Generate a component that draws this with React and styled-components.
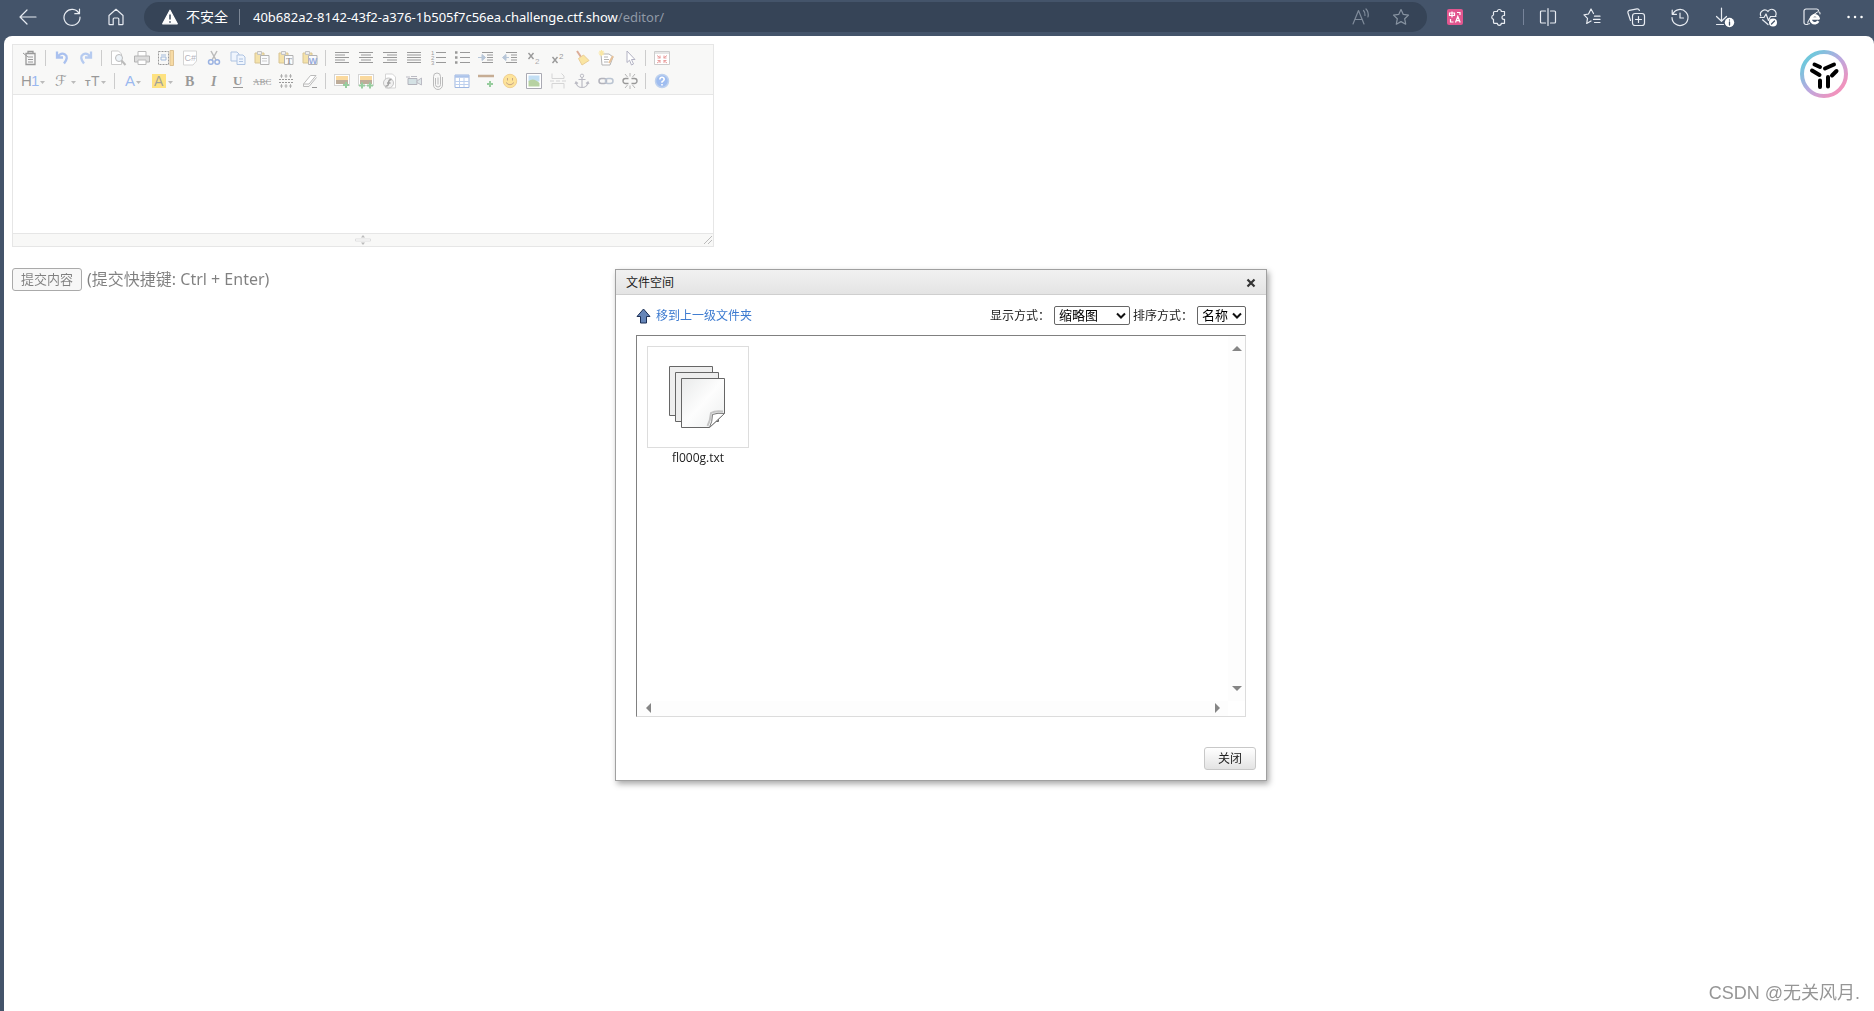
import React from "react";
import styled, { createGlobalStyle, css } from "styled-components";

const ui = `"Open Sans", "Noto Sans CJK SC", sans-serif`;
const wide = `"Noto Sans", "Noto Sans CJK SC", sans-serif`;

const Global = createGlobalStyle`
  * { box-sizing: border-box; }
  body { margin: 0; background: #44546a; font-family: ${ui}; }
  button { font-family: inherit; cursor: pointer; }
  svg { display: block; overflow: visible; }
`;

const Window = styled.div`
  min-height: 100vh;
  display: flex;
  flex-direction: column;
  background: #44546a;
`;
const BrowserBar = styled.header`
  height: 36px;
  padding: 2px 0 4px 6px;
  display: flex;
  align-items: center;
`;
const BarButton = styled.button`
  width: 44px;
  height: 30px;
  padding: 0;
  border: 0;
  background: none;
  display: grid;
  place-items: center;
  flex: none;
`;
const NarrowBarButton = styled(BarButton)`
  width: 40px;
`;
const Address = styled.div`
  flex: 1;
  height: 30px;
  margin: 0 6px;
  padding: 0 6px 0 18px;
  border-radius: 15px;
  background: #364457;
  display: flex;
  align-items: center;
  font-size: 14px;
  color: #fff;
`;
const Security = styled.span`
  margin-left: 8px;
  padding-right: 11px;
  border-right: 1px solid #7b8695;
  line-height: 16px;
  white-space: nowrap;
`;
const Url = styled.span`
  flex: 1;
  margin-left: 13px;
  font-family: ${wide};
  font-size: 13px;
  white-space: nowrap;
`;
const UrlPath = styled.span`
  color: #8f99a6;
`;
const BarRule = styled.span`
  width: 1px;
  height: 16px;
  margin: 0 2px;
  background: #77849a;
`;
const Page = styled.main`
  position: relative;
  flex: 1;
  margin-left: 4px;
  padding: 8px;
  border-radius: 8px 8px 0 0;
  background: #fff;
  overflow: hidden;
`;
const Dimmed = styled.div`
  opacity: 0.5;
`;
const Editor = styled.section`
  width: 702px;
  max-width: 100%;
  border: 1px solid #ccc;
`;
const Toolbar = styled.div`
  padding: 1px 5px 2px;
  background: #f0f0ee;
  border-bottom: 1px solid #ccc;
`;
const ToolRow = styled.div`
  display: flex;
  align-items: center;
  height: 23px;
`;
const Tool = styled.button`
  width: ${(p) => p.$w || 24}px;
  height: 22px;
  padding: 0;
  border: 0;
  background: none;
  display: grid;
  place-items: center;
`;
const ToolRule = styled.span`
  width: 1px;
  height: 16px;
  margin: 0 4px 0 3px;
  background: #999;
`;
const EditArea = styled.textarea`
  display: block;
  width: 100%;
  height: 138px;
  padding: 5px;
  border: 0;
  outline: 0;
  resize: none;
  font: 14px ${ui};
`;
const StatusBar = styled.div`
  height: 13px;
  display: grid;
  grid-template-columns: 1fr auto 1fr;
  align-items: center;
  background: #f0f0ee;
  border-top: 1px solid #ccc;
`;
const Corner = styled.span`
  grid-column: 3;
  justify-self: end;
`;
const SubmitRow = styled.div`
  margin-top: 20px;
  display: flex;
  align-items: center;
  gap: 5px;
  font-family: ${wide};
  font-size: 16px;
  line-height: 24px;
  color: #000;
`;
const Submit = styled.button`
  height: 23px;
  padding: 0 8px;
  border: 1px solid #555;
  border-radius: 3px;
  background: #efefef;
  font-size: 13px;
  line-height: 20px;
`;
const Badge = styled.div`
  position: absolute;
  top: 14px;
  right: 26px;
`;
const Overlay = styled.div`
  position: absolute;
  inset: 0;
  padding: 2px 0 0 4px;
  display: grid;
  place-items: center;
`;
const Dialog = styled.section`
  width: 652px;
  max-width: 100%;
  border: 1px solid #a0a0a0;
  background: #fff;
  box-shadow: 2px 3px 6px rgba(0, 0, 0, 0.35);
  font-size: 12px;
  line-height: 18px;
  color: #222;
`;
const DialogHead = styled.header`
  height: 25px;
  padding: 2px 9px 0 10px;
  display: flex;
  align-items: center;
  justify-content: space-between;
  background: linear-gradient(#f1f1f1, #e4e4e4);
  border-bottom: 1px solid #cfcfcf;
`;
const DialogTitle = styled.h1`
  margin: 0;
  font-size: 12px;
  font-weight: 400;
`;
const CloseX = styled.button`
  width: 12px;
  height: 16px;
  padding: 0;
  border: 0;
  background: none;
  display: grid;
  place-items: center;
`;
const DialogBody = styled.div`
  padding: 11px 20px 0;
`;
const Controls = styled.div`
  height: 20px;
  display: flex;
  align-items: center;
  justify-content: space-between;
`;
const UpLink = styled.a`
  padding-top: 1px;
  display: flex;
  align-items: center;
  gap: 5px;
  color: #3d7bd0;
  text-decoration: none;
`;
const Options = styled.div`
  display: flex;
  align-items: center;
`;
const Option = styled.label`
  display: flex;
  align-items: center;
  gap: 4px;
  margin-left: 3px;
`;
const SelectBox = styled.span`
  display: grid;
  align-items: center;
`;
const Select = styled.select`
  grid-area: 1 / 1;
  appearance: none;
  width: ${(p) => p.$w}px;
  height: 19px;
  padding: 0 4px;
  border: 1px solid #666;
  border-radius: 2px;
  background: #fff;
  color: #000;
  font: 13px/17px ${ui};
`;
const Chevron = styled.svg`
  grid-area: 1 / 1;
  justify-self: end;
  margin-right: 4px;
  pointer-events: none;
`;
const FileArea = styled.div`
  height: 382px;
  margin-top: 9px;
  border: 1px solid;
  border-color: #808080 #dcdcdc #dcdcdc #808080;
  display: grid;
  grid-template: 1fr 15px / 1fr 17px;
`;
const FileList = styled.ul`
  margin: 0;
  padding: 10px;
  list-style: none;
  display: flex;
  flex-wrap: wrap;
  align-content: flex-start;
`;
const FileItem = styled.li`
  width: 102px;
  text-align: center;
`;
const Thumb = styled.div`
  height: 102px;
  margin-bottom: 1px;
  padding-right: 2px;
  border: 1px solid #ddd;
  display: grid;
  place-items: center;
`;
const track = css`
  display: flex;
  justify-content: space-between;
  align-items: center;
  background: #fdfdfd;
`;
const VTrack = styled.div`
  ${track}
  flex-direction: column;
  padding: 10px 0;
`;
const HTrack = styled.div`
  ${track}
  padding: 0 8px 0 9px;
`;
const DialogFoot = styled.footer`
  padding: 30px 10px 10px;
  display: flex;
  justify-content: flex-end;
`;
const CloseButton = styled.button`
  width: 52px;
  height: 23px;
  padding: 0;
  border: 1px solid #c8c8c8;
  border-radius: 3px;
  background: linear-gradient(#fff, #e3e3e3);
  color: #222;
  font-size: 12px;
`;
const Watermark = styled.div`
  position: absolute;
  right: 14px;
  bottom: 5px;
  font: 18px/26px "Liberation Sans", "Noto Sans CJK SC", sans-serif;
  color: #969696;
`;

/* ---------- browser icons ---------- */
const Line = ({ children, s = 18, c = "#e8ecf2", w = 1.2 }) => (
  <svg width={s} height={s} viewBox="0 0 18 18" fill="none" stroke={c} strokeWidth={w} strokeLinecap="round" strokeLinejoin="round">{children}</svg>
);
const STAR = "M9 1.5l2.3 4.9 5.2.7-3.8 3.7 1 5.4L9 13.6l-4.7 2.6 1-5.4L1.500 7.100l5.200-.7z";
const bar = {
  back: <Line><path d="M17 9H1M8 2L1 9l7 7" /></Line>,
  reload: <Line><path d="M16 5.500A8 8 0 1 0 17 9M16.500 1v4.700h-4.700" /></Line>,
  home: <Line><path d="M2 7.500L9 1.300l7 6.200V16a.7.7 0 0 1-.7.7h-3.500V11a1 1 0 0 0-1-1H7.200a1 1 0 0 0-1 1v5.700H2.700A.7.7 0 0 1 2 16z" /></Line>,
  read: <Line c="#7f8b9a"><path d="M1 16L6.500 2.500 12 16M3 11.500h7M11.500 2.500q2 2 1.500 5M14 1q3 3 2 8" /></Line>,
  star: <Line c="#8793a1"><path d={STAR} /></Line>,
  puzzle: <Line><path d="M4.500 3.500h2.800a2 2 0 1 1 4 0h3.200v4h-.6a1.900 1.900 0 0 0 0 3.800h.6v4h-3.200a2 2 0 0 1-4 0H4.500a1 1 0 0 1-1-1v-3a2.200 2.200 0 0 1 0-4.300V4.500a1 1 0 0 1 1-1z" /></Line>,
  split: <Line><path d="M9 .5v17M6.500 3H2.500a1 1 0 0 0-1 1v10a1 1 0 0 0 1 1h4M11.500 3h4a1 1 0 0 1 1 1v10a1 1 0 0 1-1 1h-4" /></Line>,
  favs: <Line><path d="M10.500 5.500L8 1 5.500 6 1 6.800l3.500 3.500-.8 5.200L8 13M11.500 8.200H17M10.500 11.400H17M11.500 14.500H17" /></Line>,
  collect: <Line><rect x="5.500" y="5.500" width="12" height="12" rx="2.500" /><path d="M11.500 8.500v6M8.500 11.500h6M3.500 12.500L1 5q-.5-2 1.500-2.700L10 .8q1.800-.2 2.400 1.700" /></Line>,
  history: <Line><path d="M1.800 6A8 8 0 1 1 1 9.500M1.200 2v4.300h4.300M9 5v5h3.500" /></Line>,
  download: <Line><path d="M6.500 0v13M1.500 8.500l5 4.800 5-4.800M1.500 16.500h7" /><circle cx="14.500" cy="14.500" r="4.700" fill="#fff" stroke="none" /><path d="M14.500 14v3M14.500 12v.1" stroke="#44546a" strokeWidth="1.300" /></Line>,
  heart: <Line><path d="M1.800 8A4.300 4.300 0 0 1 9 3.500 4.300 4.300 0 0 1 16.500 8M1 9.500h4l2-3.500 2.500 6.500 2-4H17M3.500 11.800L9 16.500" /><circle cx="14" cy="14.500" r="4" fill="#fff" stroke="none" /><path d="M12.500 16l3-3" stroke="#44546a" /></Line>,
  ie: (
    <Line>
      <path d="M4.500 16.500H3a2 2 0 0 1-2-2V3a2 2 0 0 1 2-2h10.500a2 2 0 0 1 2 1.500" />
      <path d="M15.300 13.200A4 4 0 1 1 15.700 10.500H8.500" strokeWidth="2.600" stroke="#fff" strokeLinecap="butt" />
      <path d="M6.500 15.800Q3.500 17 5.500 12.500 9 6.500 14.500 4q3-1 2.500 2" stroke="#fff" strokeWidth="1" />
    </Line>
  ),
  more: <Line><path d="M3.500 9h.1M10 9h.1M16.500 9h.1" strokeWidth="2.400" stroke="#fff" /></Line>,
};
const Warn = () => (
  <svg width="16" height="16" viewBox="0 0 16 16"><path d="M8 1.200L15.300 14.800H.7z" fill="#fff" stroke="#fff" strokeWidth="1.200" strokeLinejoin="round" /><path d="M8 5.500v5M8 12.200v1.500" stroke="#364457" strokeWidth="1.500" /></svg>
);
const Translate = () => (
  <svg width="16" height="16" viewBox="0 0 16 16"><rect width="16" height="16" rx="2" fill="#e2568f" /><path d="M2.500 4h5v2.500h-5zM5 2.500V8.500M10 3.500h3v2.500M3.500 10v3h3M8.500 13.500l2.300-6 2.400 6M9.300 11.700h3" fill="none" stroke="#fff" strokeWidth="1.200" /></svg>
);

/* ---------- editor icons ---------- */
const Ic = ({ children, w = 16 }) => (
  <svg width={w} height="16" viewBox={`0 0 ${w} 16`} fill="none" stroke="#333" strokeWidth="1">{children}</svg>
);
const T = ({ x, y, size, c = "#333", f = "Liberation Sans", b, i, children }) => (
  <text x={x} y={y} fontSize={size} fill={c} stroke="none" fontFamily={`"${f}", sans-serif`} fontWeight={b ? 700 : 400} fontStyle={i ? "italic" : "normal"}>{children}</text>
);
const Caret = ({ x }) => <path d={`M${x} 8h5l-2.500 3z`} fill="#777" stroke="none" />;
const lines = (xs) => <path d={xs.map(([a, b], i) => `M${a} ${2.500 + i * 2.500}H${b}`).join("")} />;
const Board = ({ children }) => (
  <>
    <path d="M1 3h9v10H1z" fill="#e9c555" stroke="#b08a2a" /><path d="M3.500 1.500h4v3h-4z" fill="#ddd" stroke="#888" />
    <path d="M6.500 5.500h8.500v9H6.500z" fill="#f4f6fa" stroke="#666" />{children}
  </>
);
const Plus = ({ x, y }) => <path d={`M${x - 3} ${y}h6M${x} ${y - 3}v6`} stroke="#2f9a3c" strokeWidth="2" />;
const Photo = () => (
  <>
    <rect x=".5" y="1.500" width="15" height="11" fill="#fff" stroke="#aaa" />
    <rect x="2" y="3" width="12" height="4" fill="#f5b23c" stroke="none" />
    <rect x="2" y="7" width="12" height="4" fill="#7d5a35" stroke="none" />
  </>
);

const row1 = [
  ["HTML代码", <><path d="M4 3.500h9v11H4zM6 1.500h5v2H6z" fill="#eee" strokeWidth="1.300" /><path d="M6 7h5M6 9.500h5M6 12h5M1 3l5 4" /></>],
  null,
  ["后退", <path d="M3 1.500v6h6M3.500 7Q7 2 11 4.500t-1 9" stroke="#5583de" strokeWidth="2.300" />],
  ["前进", <path d="M13 1.500v6H7M12.500 7Q9 2 5 4.500t1 9" stroke="#6d97e0" strokeWidth="2.300" />],
  null,
  ["预览", <><path d="M1.500 1h7l3 3v10.500h-10z" fill="#fff" stroke="#999" /><circle cx="9" cy="8" r="3.500" fill="#dce8f2" stroke="#777" /><path d="M11.500 10.500l4 4.500" stroke="#777" strokeWidth="2" /></>],
  ["打印", <><path d="M4 6V1.500h8V6" fill="#fff" stroke="#777" /><path d="M.5 6h15v6H.5z" fill="#bbb" stroke="#666" /><path d="M4 10h8v4.500H4z" fill="#fff" stroke="#777" /></>],
  ["模板", <><path d="M.5 1.500h10v13H.5z" strokeDasharray="2 1" /><path d="M3 5h5M3 7h5v3H3z" stroke="#4674b8" /><path d="M12 .5h3.500v15H12z" fill="#eeb64a" stroke="#b98324" /></>],
  ["插入代码", <><path d="M1.500 1h13v10l-3.500 4H1.500z" fill="#fff" stroke="#aaa" /><T x="2.500" y="11" size="9" c="#667">C#</T></>],
  ["剪切", <><path d="M5 1l5 9M11 1l-5 9" stroke="#777" strokeWidth="1.500" /><circle cx="4.800" cy="12" r="2.300" stroke="#3565c4" strokeWidth="1.500" /><circle cx="11.200" cy="12" r="2.300" stroke="#3565c4" strokeWidth="1.500" /></>],
  ["复制", <><path d="M1 2h6l2 2v7H1z" fill="#dfeafa" stroke="#5f88c4" /><path d="M7 5h6l2 2v7.500H7z" fill="#dfeafa" stroke="#5f88c4" /><path d="M9 9h4M9 11.500h4" stroke="#5f88c4" /></>],
  ["粘贴", <Board><path d="M8 8.500h5M8 11h5" stroke="#999" /></Board>],
  ["粘贴为无格式文本", <Board><T x="8" y="13.500" size="9" b f="Liberation Serif">T</T></Board>],
  ["从Word粘贴", <Board><T x="6.800" y="13.500" size="9" b c="#2a55b8">W</T></Board>],
  null,
  ["左对齐", lines([[1, 15], [1, 11], [1, 15], [1, 11], [1, 15]])],
  ["居中", lines([[1, 15], [3, 13], [1, 15], [3, 13], [1, 15]])],
  ["右对齐", lines([[1, 15], [5, 15], [1, 15], [5, 15], [1, 15]])],
  ["两端对齐", lines([[1, 15], [1, 15], [1, 15], [1, 15], [1, 15]])],
  ["编号", <><path d="M6 2.500h10M6 7.500h10M6 12.500h10" /><T x="1" y="5" size="6">1</T><T x="1" y="10" size="6">2</T><T x="1" y="15" size="6">3</T></>],
  ["项目符号", <><path d="M6 2.500h10M6 7.500h10M6 12.500h10" /><path d="M1 2.500h2.500M1 7.500h2.500M1 12.500h2.500" strokeWidth="2.500" /></>],
  ["增加缩进", <><path d="M4 2.500h11M9 5h6M9 7.500h6M9 10h6M4 12.500h11" strokeWidth="1.200" /><path d="M0 7.500h5M4 4.500l3.500 3L4 10.500z" fill="#6f8cb0" stroke="#6f8cb0" /></>],
  ["减少缩进", <><path d="M4 2.500h11M9 5h6M9 7.500h6M9 10h6M4 12.500h11" strokeWidth="1.200" /><path d="M7 7.500H3M4 4.500L.5 7.500l3.500 3z" fill="#6f8cb0" stroke="#6f8cb0" /></>],
  ["下标", <><path d="M2.500 3l5 6M7.500 3l-5 6" strokeWidth="1.400" /><T x="9" y="13.500" size="8" c="#555">2</T></>],
  ["上标", <><path d="M2.500 7l5 6M7.500 7l-5 6" strokeWidth="1.400" /><T x="9" y="8.500" size="8">2</T></>],
  ["清理HTML代码", <><path d="M3 1l4 6" stroke="#b8582e" strokeWidth="2" /><path d="M4.500 8.500l5-3.500 5.500 5.500-7 4.500z" fill="#f5cb45" stroke="#d29a2b" /></>],
  ["一键排版", <><path d="M3 4h8l4 3-3 8H4z" fill="#fff" stroke="#666" /><path d="M6 7h4M6 9.500h5M6 12h4" stroke="#666" /><path d="M3.500 0v6M.5 3h6M1.500 1l4 4M5.500 1l-4 4" stroke="#f3cf4d" strokeWidth="1.200" /><path d="M15 6l-4 7" stroke="#cf8434" strokeWidth="2" /></>],
  ["全选", <path d="M5 1l8 8.500H9.500l2 4.500-2 1-2-4.800L5 12.500z" fill="#fff" stroke="#668" />],
  null,
  ["全屏显示", <><path d="M.5 1.500h15v13H.5z" fill="#fff" stroke="#999" /><path d="M1 3h14" stroke="#ccc" strokeWidth="2" /><path d="M3 5.500l3.500 2.500M13 5.500L9.500 8M3 13l3.500-2.500M13 13l-3.500-2.500M6 5.500V8H3.500M10 5.500V8h2.500M6 13v-2.500H3.500M10 13v-2.500h2.500" stroke="#d23c3c" /></>],
];

const row2 = [
  ["段落", <><T x="-1" y="13" size="15">H</T><T x="9" y="13" size="15" c="#3470e0">1</T><Caret x={18} /></>, 31, 24],
  ["字体", <><T x="0" y="13" size="15" f="DejaVu Sans">ℱ</T><Caret x={16} /></>, 31, 20],
  ["文字大小", <><T x="-1" y="13" size="9" b>T</T><T x="5" y="13" size="14">T</T><Caret x={15} /></>, 31, 20],
  null,
  ["文字颜色", <><T x="0" y="13" size="15" c="#3470e0">A</T><Caret x={11} /></>, 29, 18],
  ["文字背景", <><rect x="0" y="1" width="14" height="14" fill="#fdc400" stroke="none" /><T x="2" y="13" size="14" c="#443">A</T><Caret x={16} /></>, 30, 22],
  ["粗体", <T x="3" y="13" size="14" b f="Liberation Serif">B</T>],
  ["斜体", <T x="5" y="13" size="14" b i f="Liberation Serif">I</T>],
  ["下划线", <><T x="3" y="12" size="13" b f="Liberation Serif">U</T><path d="M3 14.500h10" /></>],
  ["删除线", <><T x="-1" y="11.500" size="9" f="Liberation Serif">ABC</T><path d="M-1 8.500h18" strokeWidth="0.600" /></>],
  ["行距", <path d="M1 6.500h14M1 9.500h14" strokeDasharray="2 1" />, 24, 16, <path d="M3.500 1v4M8 1v4M12.500 1v4M3.500 11v4M8 11v4M12.500 11v4M2 3h3M6.500 3h3M11 3h3M2 13h3M6.500 13h3M11 13h3" strokeWidth="0.700" />],
  ["删除格式", <><path d="M1.500 11l7-8.500h5.500l-7 8.500z" fill="#fff" stroke="#777" /><path d="M1.500 11v2.500H7l7.500-9" stroke="#777" /><path d="M10 14.500h5" /></>],
  null,
  ["图片", <><Photo /><Plus x={12} y={12} /></>],
  ["批量图片上传", <><Photo /><Plus x={4} y={12.500} /><Plus x={12} y={12.500} /></>],
  ["Flash", <><path d="M3.500 1h7l3 3v11h-10z" fill="#fff" stroke="#aaa" /><circle cx="6.500" cy="10" r="5" fill="#e3e3e3" stroke="#888" /><path d="M9.500 6.500Q6.500 6.500 6.500 10t-3 3M5 10H8.500" stroke="#444" strokeWidth="1.500" /></>],
  ["视音频", <><path d="M2 5.500h9v6H2z" fill="#a9c3c9" stroke="#667" /><path d="M11 8l4.500-3v7L11 9.500zM0 4h4M5 3.500h6" fill="#bccdd1" stroke="#778" /></>],
  ["插入文件", <path d="M5.500 5v6.500a2.500 2.500 0 0 0 5 0V3.500a3.500 3.500 0 0 0-7 0V12a4.500 4.500 0 0 0 9 0V4M8 4.500v7" stroke="#777" />],
  ["表格", <><path d="M1 2h14v12.500H1z" fill="#fff" stroke="#3c6fc4" /><path d="M1 3.500h14" stroke="#5b88d4" strokeWidth="2.500" /><path d="M1 8.500h14M1 11.500h14M5.500 5v9M10 5v9" stroke="#7ba0dc" /></>],
  ["插入横线", <><path d="M0 3h16" stroke="#8c5a28" strokeWidth="2.500" /><Plus x={12} y={11} /></>],
  ["插入表情", <><circle cx="8" cy="8" r="6.700" fill="#fbc733" stroke="#e0a024" /><path d="M5.500 5v2.500M10.500 5v2.500M4 9.500q4 4.500 8 0" stroke="#8a4a10" /></>],
  ["Google地图", <><path d="M.5.500h15v15H.5z" fill="#fff" stroke="#556" /><path d="M2.500 2.500h11v6h-11z" fill="#86bfe8" stroke="none" /><path d="M2.500 8q5-4 11 2v3.500h-11z" fill="#6fa544" stroke="none" /></>],
  ["插入分页符", <path d="M2 .5v5h12V3l-2.500-2.500M2 15.500v-5h12v5M0 8h4M6 8h4M12 8h4" stroke="#aaa" />],
  ["锚点", <><circle cx="8" cy="2.800" r="1.700" stroke="#778" /><path d="M8 4.500v10M4.500 6.500h7M2 9.500q1 5 6 5t6-5M1 11l1-2 2 1.500M15 11l-1-2-2 1.500" stroke="#778" strokeWidth="1.200" /></>],
  ["超级链接", <><rect x="1" y="5.500" width="7.500" height="5" rx="2.500" stroke="#667" strokeWidth="1.500" /><rect x="7.500" y="5.500" width="7.500" height="5" rx="2.500" stroke="#778aa5" strokeWidth="1.500" /></>],
  ["取消超级链接", <><path d="M6.500 5.500h-3a2.500 2.500 0 0 0 0 5h3M9.500 5.500h3a2.500 2.500 0 0 1 0 5h-3" strokeWidth="1.400" /><path d="M8 0v3.500M3 1l2.500 3M13 1l-2.500 3M8 16v-3.500M3 15l2.500-3M13 15l-2.500-3" strokeWidth="0.700" /></>],
  null,
  ["关于", <><circle cx="8" cy="8" r="6.500" fill="#3f7be0" stroke="#7ba2dc" strokeWidth="1.500" /><path d="M5.800 6.500Q6 4.300 8 4.300T10.200 6.300Q10 7.500 8 8.800v1M8 11v1.500" stroke="#fff" strokeWidth="1.600" /></>],
];

const Tools = ({ items }) => (
  <ToolRow>
    {items.map((t, i) =>
      t ? (
        <Tool key={i} $w={t[2]} title={t[0]} aria-label={t[0]}><Ic w={t[3]}>{t[1]}{t[4]}</Ic></Tool>
      ) : (
        <ToolRule key={i} />
      )
    )}
  </ToolRow>
);

const Logo = () => (
  <svg width="48" height="48" viewBox="0 0 48 48" fill="none">
    <defs>
      <linearGradient id="ring" x1="0.150" y1="0.150" x2="0.850" y2="0.850">
        <stop offset="0" stopColor="#71c7dc" /><stop offset="0.500" stopColor="#b9a9e0" /><stop offset="1" stopColor="#f093bd" />
      </linearGradient>
    </defs>
    <circle cx="24" cy="24" r="22" stroke="url(#ring)" strokeWidth="4" fill="#fff" />
    <path d="M14.500 14.500l5.500 2.500M25 18.500l9-4M12 20.500l7.500 4.500M32 25.500l4.500-4.500M20 30.500v6.500M28 27v9.500" stroke="#000" strokeWidth="4" strokeLinecap="round" />
  </svg>
);

const Files = () => (
  <svg width="56" height="62" viewBox="0 0 56 62" stroke="#666">
    <defs>
      <linearGradient id="sheet" x1="0" y1="0" x2="1" y2="1"><stop offset="0" stopColor="#e9eaea" /><stop offset="0.500" stopColor="#fdfdfd" /><stop offset="1" stopColor="#eceeee" /></linearGradient>
    </defs>
    <path d="M.5.500h43v49H.5z" fill="#eee" /><path d="M6.500 6.500h43v49h-43z" fill="#eee" />
    <path d="M12.500 12.500h43v35l-15 14h-28z" fill="url(#sheet)" />
    <path d="M54 45.500q-8-1-12 1.500-.5 7-3.500 13" fill="none" stroke="#c4c4c4" strokeWidth="2" />
    <path d="M55.500 47.500q-7-1-12 1 0 7-3 13z" fill="#fff" stroke="#777" />
  </svg>
);

const Arrow = ({ d, w, h }) => <svg width={w} height={h}><path d={d} fill="#858585" /></svg>;

const Drop = ({ label, w, options }) => (
  <Option>
    {label}
    <SelectBox>
      <Select $w={w}>{options.map((o) => <option key={o}>{o}</option>)}</Select>
      <Chevron width="10" height="6" viewBox="0 0 10 6" fill="none" stroke="#111" strokeWidth="2"><path d="M1 .5l4 4 4-4" /></Chevron>
    </SelectBox>
  </Option>
);

export default function App() {
  return (
    <Window>
      <Global />
      <BrowserBar>
        <BarButton aria-label="返回">{bar.back}</BarButton>
        <BarButton aria-label="刷新">{bar.reload}</BarButton>
        <BarButton aria-label="主页">{bar.home}</BarButton>
        <Address>
          <Warn />
          <Security>不安全</Security>
          <Url>40b682a2-8142-43f2-a376-1b505f7c56ea.challenge.ctf.show<UrlPath>/editor/</UrlPath></Url>
          <NarrowBarButton aria-label="大声朗读">{bar.read}</NarrowBarButton>
          <NarrowBarButton aria-label="收藏">{bar.star}</NarrowBarButton>
        </Address>
        <BarButton aria-label="翻译"><Translate /></BarButton>
        <BarButton aria-label="扩展">{bar.puzzle}</BarButton>
        <BarRule />
        <BarButton aria-label="分屏">{bar.split}</BarButton>
        <BarButton aria-label="收藏夹">{bar.favs}</BarButton>
        <BarButton aria-label="集锦">{bar.collect}</BarButton>
        <BarButton aria-label="历史记录">{bar.history}</BarButton>
        <BarButton aria-label="下载">{bar.download}</BarButton>
        <BarButton aria-label="性能">{bar.heart}</BarButton>
        <BarButton aria-label="IE 模式">{bar.ie}</BarButton>
        <NarrowBarButton aria-label="更多">{bar.more}</NarrowBarButton>
      </BrowserBar>
      <Page>
        <Dimmed>
          <Editor>
            <Toolbar>
              <Tools items={row1} />
              <Tools items={row2} />
            </Toolbar>
            <EditArea aria-label="内容" />
            <StatusBar>
              <span />
              <svg width="16" height="10" viewBox="0 0 16 10"><path d="M6 2.500L8 0l2 2.500zM6 7.500L8 10l2-2.500z" fill="#777" /><path d="M.5 4h15v2H.5z" fill="#fff" stroke="#aaa" strokeWidth="0.700" /></svg>
              <Corner><svg width="10" height="10" viewBox="0 0 10 10" stroke="#777"><path d="M1 9l8-8M5 9l4-4" /></svg></Corner>
            </StatusBar>
          </Editor>
          <SubmitRow>
            <Submit>提交内容</Submit>
            <span>(提交快捷键: Ctrl + Enter)</span>
          </SubmitRow>
        </Dimmed>
        <Badge><Logo /></Badge>
        <Overlay>
          <Dialog role="dialog" aria-label="文件空间">
            <DialogHead>
              <DialogTitle>文件空间</DialogTitle>
              <CloseX aria-label="关闭窗口"><svg width="8" height="8" viewBox="0 0 8 8" stroke="#333" strokeWidth="2.200"><path d="M.5.500l7 7M7.500.500l-7 7" /></svg></CloseX>
            </DialogHead>
            <DialogBody>
              <Controls>
                <UpLink href="#up">
                  <svg width="15" height="16" viewBox="0 0 15 16"><path d="M7.500 1L14 8.500h-3.500V15h-6V8.500H1z" fill="#6585b8" stroke="#1c2f55" /></svg>
                  移到上一级文件夹
                </UpLink>
                <Options>
                  <Drop label="显示方式：" w={76} options={["缩略图", "详细信息"]} />
                  <Drop label="排序方式：" w={49} options={["名称", "大小", "类型"]} />
                </Options>
              </Controls>
              <FileArea>
                <FileList>
                  <FileItem><Thumb><Files /></Thumb>fl000g.txt</FileItem>
                </FileList>
                <VTrack><Arrow w={10} h={5} d="M0 5L5 0l5 5z" /><Arrow w={10} h={5} d="M0 0h10L5 5z" /></VTrack>
                <HTrack><Arrow w={5} h={10} d="M5 0v10L0 5z" /><Arrow w={5} h={10} d="M0 0v10l5-5z" /></HTrack>
              </FileArea>
            </DialogBody>
            <DialogFoot><CloseButton>关闭</CloseButton></DialogFoot>
          </Dialog>
        </Overlay>
        <Watermark>CSDN @无关风月.</Watermark>
      </Page>
    </Window>
  );
}
